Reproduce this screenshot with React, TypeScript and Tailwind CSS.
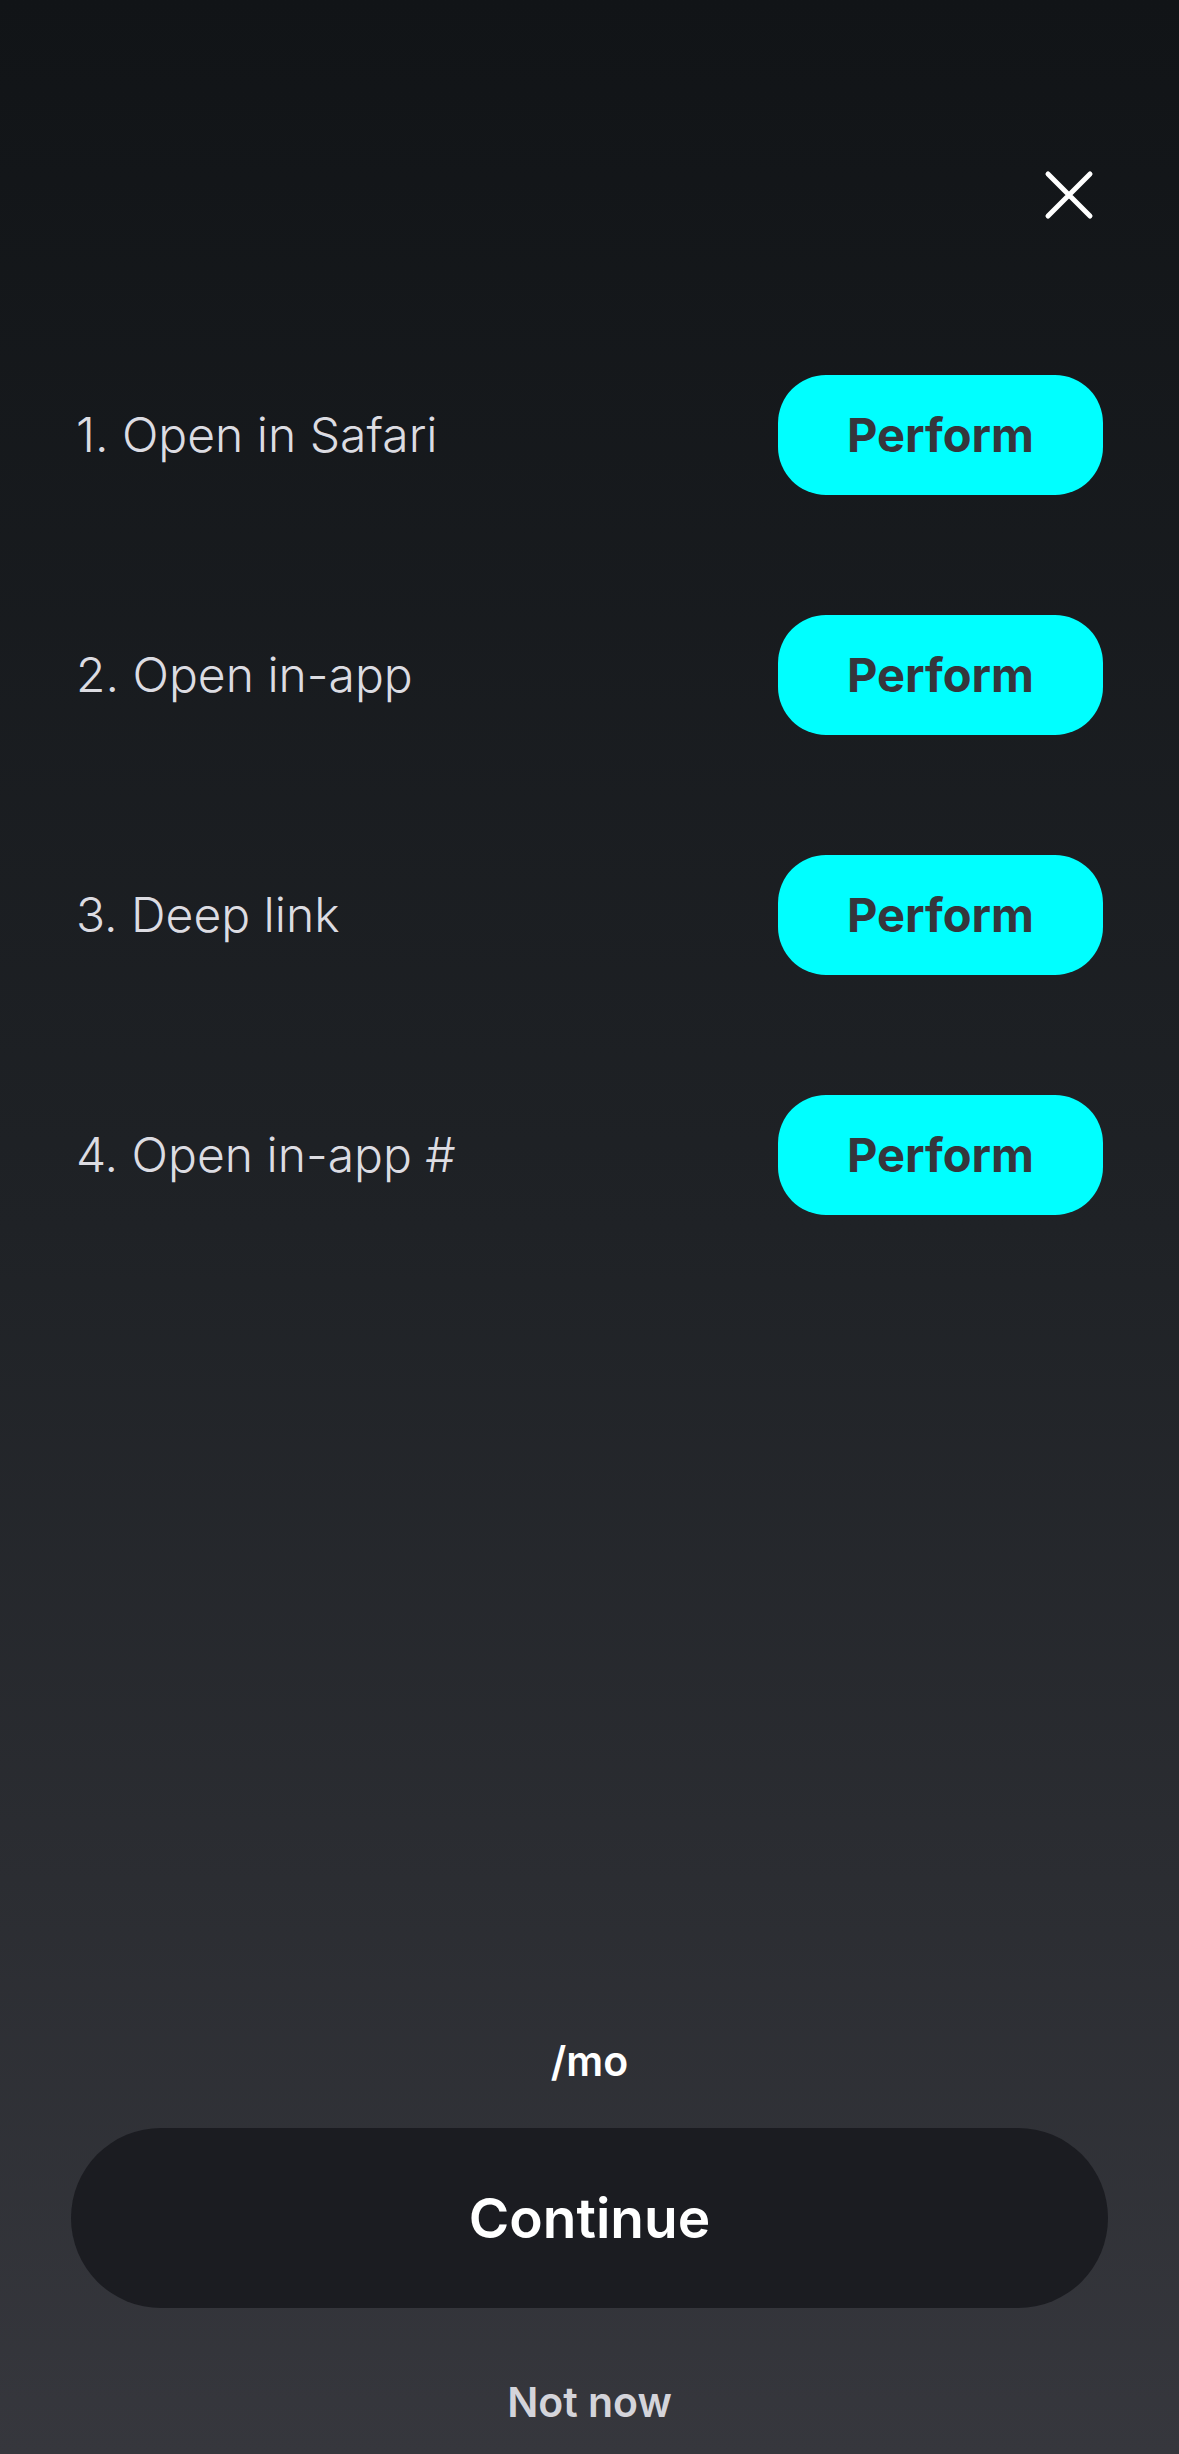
import React from "react";

const rows = ["1. Open in Safari", "2. Open in-app", "3. Deep link", "4. Open in-app #"];

export default function App() {
  return (
    <div
      className="flex h-[2454px] w-full flex-col bg-gradient-to-b from-[#111417] via-[#1f2226] to-[#36373d] px-[76px]"
      style={{ fontFamily: "Inter, 'Noto Sans', sans-serif" }}
    >
      <div className="flex justify-end pt-[168px]">
        <button className="mr-[7px] flex h-[54px] w-[54px] items-center justify-center">
          <svg width="50" height="50" viewBox="0 0 50 50" fill="none">
            <path d="M4 4 L46 46 M46 4 L4 46" stroke="#ffffff" strokeWidth="5" strokeLinecap="round" />
          </svg>
        </button>
      </div>
      <div className="mt-[153px] flex flex-col gap-[120px]">
        {rows.map((r) => (
          <div key={r} className="flex h-[120px] items-center justify-between">
            <span className="text-[48px] font-light text-[#dcdce2]">{r}</span>
            <button className="flex h-[120px] w-[325px] items-center justify-center rounded-[48px] bg-[#00ffff] text-[47px] font-bold text-[#35363c]">
              Perform
            </button>
          </div>
        ))}
      </div>
      <div className="flex-1" />
      <div className="-mx-[5px] flex flex-col items-center">
        <div className="text-[41px] font-semibold leading-[48px] text-white">/mo</div>
        <button className="mt-[43px] flex h-[180px] w-full items-center justify-center rounded-full bg-[#1b1c21] text-[55px] font-semibold text-white">
          Continue
        </button>
        <button className="mt-[70px] mb-[28px] text-[41px] font-semibold leading-[48px] text-[#d4d4da]">
          Not now
        </button>
      </div>
    </div>
  );
}
